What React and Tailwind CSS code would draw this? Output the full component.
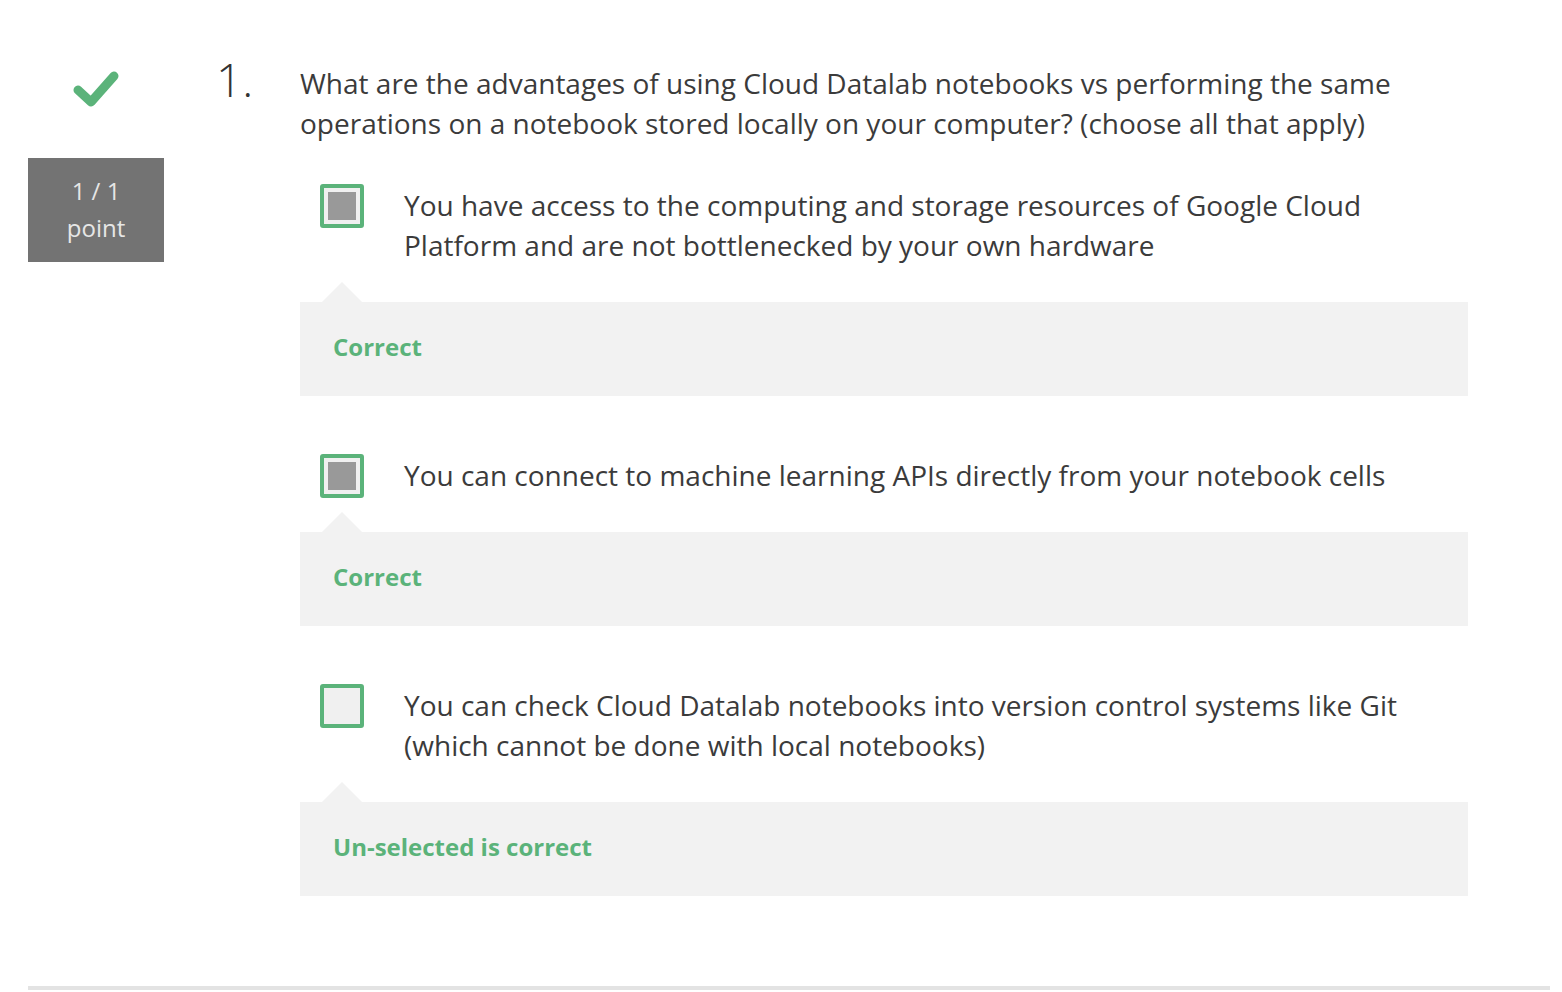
const options = [
  {
    text: 'You have access to the computing and storage resources of Google Cloud Platform and are not bottlenecked by your own hardware',
    checked: true,
    feedback: 'Correct',
  },
  {
    text: 'You can connect to machine learning APIs directly from your notebook cells',
    checked: true,
    feedback: 'Correct',
  },
  {
    text: 'You can check Cloud Datalab notebooks into version control systems like Git (which cannot be done with local notebooks)',
    checked: false,
    feedback: 'Un-selected is correct',
  },
];

const Checkbox = ({ checked }) => (
  <div className="w-[44px] h-[44px] shrink-0 rounded-[3px] border-4 border-[#5bb37a] bg-[#f0f0f0] flex items-center justify-center">
    {checked && <div className="w-[28px] h-[28px] bg-[#999999]" />}
  </div>
);

const App = () => {
  return (
    <div className="w-[1562px] min-h-[992px] bg-white font-['Open_Sans',sans-serif] text-[#3b3b3b]">
      <div className="flex pl-[28px] pt-[63px]">
        {/* left column */}
        <div className="w-[136px] shrink-0 flex flex-col items-center">
          <svg width="48" height="38" viewBox="0 0 48 38" className="mt-[7px]">
            <path d="M6 20 L19 32 L42 6" fill="none" stroke="#5bb37a" strokeWidth="9" strokeLinecap="round" strokeLinejoin="round" />
          </svg>
          <div className="mt-[50px] w-[136px] h-[104px] bg-[#737373] text-[#e6e6e6] text-[24px] leading-[37px] flex flex-col items-center justify-center pb-[2px]">
            <span>1 / 1</span>
            <span>point</span>
          </div>
        </div>

        <div className="ml-[52px] w-[84px] shrink-0 text-[46px] font-light leading-[34px] text-[#333] mt-[-1px]">1.</div>

        {/* question */}
        <div className="w-[1168px]">
          <p className="text-[28px] leading-[40px] pr-[40px]">
            What are the advantages of using Cloud Datalab notebooks vs performing the same operations on a notebook stored locally on your computer? (choose all that apply)
          </p>

          <div className="mt-[41px] flex flex-col gap-[58px]">
            {options.map((opt, i) => (
              <div key={i}>
                <div className="flex items-start pl-[20px]">
                  <Checkbox checked={opt.checked} />
                  <p className="ml-[40px] pt-[1px] pb-[3px] text-[28px] leading-[40px] w-[1040px]">{opt.text}</p>
                </div>
                <div className="relative mt-[34px] h-[94px] bg-[#f2f2f2] flex items-center pl-[33px] pb-[4px]">
                  <div className="absolute left-[22px] top-[-20px] w-0 h-0 border-l-[20px] border-r-[20px] border-b-[20px] border-l-transparent border-r-transparent border-b-[#f2f2f2]" />
                  <span className="text-[24px] font-bold text-[#5bb37a]">{opt.feedback}</span>
                </div>
              </div>
            ))}
          </div>
        </div>
      </div>
      <div className="mt-[90px] ml-[28px] w-[1522px] h-[4px] bg-[#e3e3e3]" />
    </div>
  );
};

export default App;
